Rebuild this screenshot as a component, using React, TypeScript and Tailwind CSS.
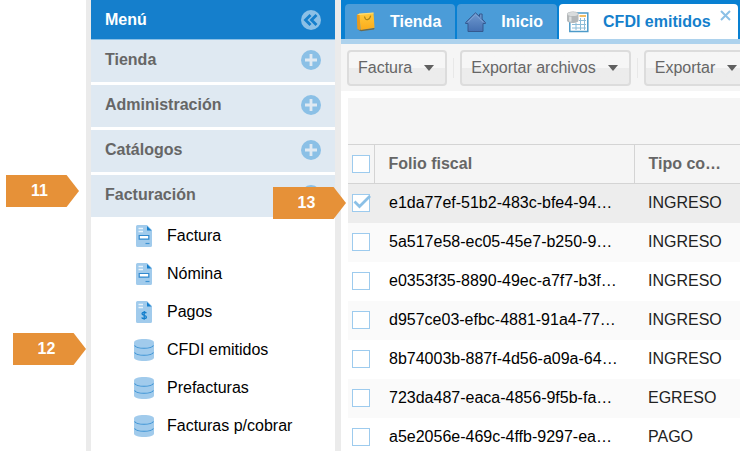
import { useState } from 'react'

const secciones = ['Tienda', 'Administración', 'Catálogos', 'Facturación']

const opciones = [
  { nombre: 'Factura', icono: 'documento' },
  { nombre: 'Nómina', icono: 'documento' },
  { nombre: 'Pagos', icono: 'pago' },
  { nombre: 'CFDI emitidos', icono: 'datos' },
  { nombre: 'Prefacturas', icono: 'datos' },
  { nombre: 'Facturas p/cobrar', icono: 'datos' },
]

const filas = [
  { folio: 'e1da77ef-51b2-483c-bfe4-94…', tipo: 'INGRESO' },
  { folio: '5a517e58-ec05-45e7-b250-9…', tipo: 'INGRESO' },
  { folio: 'e0353f35-8890-49ec-a7f7-b3f…', tipo: 'INGRESO' },
  { folio: 'd957ce03-efbc-4881-91a4-77…', tipo: 'INGRESO' },
  { folio: '8b74003b-887f-4d56-a09a-64…', tipo: 'INGRESO' },
  { folio: '723da487-eaca-4856-9f5b-fa…', tipo: 'EGRESO' },
  { folio: 'a5e2056e-469c-4ffb-9297-ea…', tipo: 'PAGO' },
]

function IconoCirculo({ tipo }: { tipo: 'mas' | 'menos' | 'contraer' }) {
  return (
    <svg width="20" height="20" viewBox="0 0 20 20" fill="none" aria-hidden="true">
      <circle cx="10" cy="10" r="10" fill="#8bc0e6" />
      {tipo === 'contraer' ? (
        <path d="M9.500 5 4.500 10l5 5M15.500 5l-5 5 5 5" stroke="#157fcc" strokeWidth="2.800" />
      ) : (
        <path d={tipo === 'mas' ? 'M10 4v12M4 10h12' : 'M4 10h12'} stroke="#dfe9f2" strokeWidth="2.800" />
      )}
    </svg>
  )
}

function IconoOpcion({ icono }: { icono: string }) {
  if (icono === 'datos') {
    return (
      <svg width="20" height="22" viewBox="0 0 20 22" fill="none" aria-hidden="true">
        <path d="M0 3.500C0 1.500 4 0 10 0s10 1.500 10 3.500v15c0 2-4 3.500-10 3.500S0 20.500 0 18.500z" fill="#a1cbec" />
        <path d="M.5 6.500c1.500 2 5 2.800 9.500 2.800s8-.8 9.500-2.800M.5 13.500c1.500 2 5 2.800 9.500 2.800s8-.8 9.500-2.800" stroke="#3c93d4" strokeWidth="1.100" />
      </svg>
    )
  }
  return (
    <svg width="16" height="22" viewBox="0 0 16 22" fill="none" aria-hidden="true">
      <path d="M1.500 0H11l5 5v15.500a1.500 1.500 0 0 1-1.500 1.500h-13A1.500 1.500 0 0 1 0 20.500v-19A1.500 1.500 0 0 1 1.500 0z" fill="#a1cbec" />
      <path d="M11 1v4.500h4.500z" fill="#157fcc" />
      <path d="M2.500 3.500H7M2.500 6.500H7" stroke="#e8f3fb" strokeWidth="1.400" />
      {icono === 'documento' ? (
        <>
          <path d="M3.200 10.500h9.600v3.600H3.200z" fill="#fff" stroke="#3189cf" strokeWidth="1.200" />
          <path d="M9.500 18.500h4" stroke="#3c93d4" strokeWidth="1.200" />
        </>
      ) : (
        <path d="M10.300 12.300C9.800 11 6 10.700 6 12.800c0 2 4.400 1.200 4.400 3.300 0 2.200-4.200 1.900-4.700.4M8.200 10v8.700" stroke="#157fcc" strokeWidth="1.300" />
      )}
    </svg>
  )
}

function IconoBolsa() {
  return (
    <svg width="20" height="20" viewBox="0 0 20 20" aria-hidden="true">
      <defs>
        <linearGradient id="bolsa" x1="0" y1="0" x2="0" y2="1">
          <stop offset="0" stopColor="#ffcb3d" />
          <stop offset="1" stopColor="#fbab1a" />
        </linearGradient>
      </defs>
      <path d="M1.500 17.500 5 19.200l13-1.700.5-1.500z" fill="#6d6a4c" />
      <path d="M.8 3 4 1.300v17L1.300 17z" fill="#e99a1c" />
      <path d="M3.500 2 17.500.8l1 15L4.500 18z" fill="url(#bolsa)" />
      <path d="M1 3 3.500 1.500l14-1v1L4 3z" fill="#ffdc6e" />
      <path d="M8.500 4.500c.8 4.500 5 4.300 6.200-.8" fill="none" stroke="#a98418" strokeWidth="1.200" />
    </svg>
  )
}

function IconoCasa() {
  return (
    <svg width="21" height="20" viewBox="0 0 21 20" aria-hidden="true">
      <defs>
        <linearGradient id="casa" x1="0" y1="0" x2="0" y2="1">
          <stop offset="0" stopColor="#6f99cf" />
          <stop offset="1" stopColor="#4470b2" />
        </linearGradient>
      </defs>
      <path d="M10.500.8 14.500 4.500V2h2.600v5l3.300 3.500v1h-2.400v8H3v-8H.6v-1z" fill="url(#casa)" stroke="#34598f" />
      <path d="m2.800 10.300 7.700-7.600 7.700 7.600" fill="none" stroke="#84a9d8" strokeWidth="0.800" />
    </svg>
  )
}

function IconoTabla() {
  return (
    <svg width="22" height="22" viewBox="0 0 22 22" fill="none" aria-hidden="true">
      <path d="M2.800 2h18v18.500h-18z" fill="#fff" stroke="#4c9ac9" strokeWidth="1.500" />
      <path d="M12.500 5h6.500" stroke="#f4bd62" strokeWidth="2" />
      <path d="M12 9.500h7M5 13.500h14M5 17h14M9 12v7M13.500 7v12M17.500 7v12" stroke="#8bbcd8" />
      <path d="M0 3C0 1.400 2.600.5 5.700.5s5.800.9 5.800 2.500v6.400c0 1.600-2.700 2.500-5.800 2.500S0 11 0 9.400z" fill="#b3b7b9" />
      <ellipse cx="5.700" cy="3" rx="5.200" ry="2" fill="#d9dcdd" />
      <path d="M3.300 5.600v5" stroke="#dcdfe0" strokeWidth="2.400" />
    </svg>
  )
}

function Boton({ texto }: { texto: string }) {
  return (
    <button
      type="button"
      className="flex h-9 shrink-0 items-center gap-3 rounded border-2 border-[#dcdcdc] bg-linear-to-b from-[#f6f6f6] from-50% to-[#ececec] to-50% pr-[11px] pl-[9px] text-[#666]"
    >
      {texto}
      <svg width="10" height="6" viewBox="0 0 10 6" aria-hidden="true">
        <path d="M0 0h10L5 6z" fill="#606060" />
      </svg>
    </button>
  )
}

function Casilla({ etiqueta, marcada, onChange }: { etiqueta: string; marcada: boolean; onChange: () => void }) {
  return (
    <label className="relative ml-1 block size-[18px]">
      <input
        type="checkbox"
        aria-label={etiqueta}
        checked={marcada}
        onChange={onChange}
        className="block size-[18px] appearance-none border border-[#9dcbee] bg-white"
      />
      {marcada && (
        <svg className="pointer-events-none absolute inset-0" width="19" height="18" viewBox="0 0 19 18" fill="none" aria-hidden="true">
          <path d="m2.500 7.500 5 5L18 2" stroke="#8bc0e6" strokeWidth="2.800" />
        </svg>
      )}
    </label>
  )
}

// Flecha numerada que señala cada paso
function Paso({ numero, posicion }: { numero: number; posicion: string }) {
  return (
    <div
      className={`absolute flex h-8 w-[73px] items-center bg-[#e69138] pr-1.5 [clip-path:polygon(0_0,83%_0,100%_50%,83%_100%,0_100%)] ${posicion}`}
    >
      <span className="w-full text-center font-bold text-white">{numero}</span>
    </div>
  )
}

export default function App() {
  const [seleccion, setSeleccion] = useState<number[]>([0])

  function alternar(i: number) {
    setSeleccion(s => (s.includes(i) ? s.filter(n => n !== i) : [...s, i]))
  }

  function alternarTodas() {
    setSeleccion(s => (s.length === filas.length ? [] : filas.map((_, i) => i)))
  }

  return (
    <div className="relative flex h-screen overflow-hidden bg-white pl-[86px] font-['Liberation_Sans',Arial,sans-serif] text-base leading-5 text-black">
      <aside className="w-[255px] shrink-0 border-r-[6px] border-l-[5px] border-[#ebebeb] bg-white">
        <div className="flex h-10 items-center justify-between border-b border-[#8bc0e6] bg-[#157fcc] px-[14px] font-bold text-white">
          <h2>Menú</h2>
          <button type="button" aria-label="Contraer menú">
            <IconoCirculo tipo="contraer" />
          </button>
        </div>
        <nav>
          <div className="flex flex-col gap-[3px]">
            {secciones.map(nombre => (
              <button
                key={nombre}
                type="button"
                className="flex h-[42px] items-center justify-between bg-[#dfe9f2] px-[14px] pb-0.5 font-bold text-[#666]"
              >
                {nombre}
                <IconoCirculo tipo={nombre === 'Facturación' ? 'menos' : 'mas'} />
              </button>
            ))}
          </div>
          <ul>
            {opciones.map(o => (
              <li key={o.nombre}>
                <a href="#" className="flex h-[38px] items-center gap-3 pl-[42px]">
                  <span className="flex w-[22px] justify-center">
                    <IconoOpcion icono={o.icono} />
                  </span>
                  {o.nombre}
                </a>
              </li>
            ))}
          </ul>
        </nav>
      </aside>

      <main className="min-w-0 flex-1">
        <div className="flex h-11 items-end gap-0.5 overflow-hidden border-b-[5px] border-[#add2ed] bg-[#0880d2] pl-1 font-bold text-white">
          <button type="button" className="flex h-[35px] shrink-0 items-center gap-[14px] rounded-t bg-[#4b9cd8] pr-[14px] pl-[11px]">
            <IconoBolsa />
            Tienda
          </button>
          <button type="button" className="flex h-[35px] shrink-0 items-center gap-[15px] rounded-t bg-[#4b9cd8] pr-[14px] pl-2">
            <IconoCasa />
            Inicio
          </button>
          <div className="flex h-[35px] shrink-0 items-center rounded-t bg-white pr-[7px] pl-2 text-[#157fcc]">
            <button type="button" className="flex items-center gap-[14px]">
              <IconoTabla />
              CFDI emitidos
            </button>
            <button type="button" aria-label="Cerrar" className="mb-3 ml-[9px]">
              <svg width="11" height="11" viewBox="0 0 11 11" aria-hidden="true">
                <path d="m1 1 9 9M10 1l-9 9" stroke="#8bc0e6" strokeWidth="2" />
              </svg>
            </button>
          </div>
        </div>

        <div className="flex h-[47px] items-center gap-1.5 overflow-hidden bg-[#f5f5f5] pl-1.5">
          <Boton texto="Factura" />
          <span className="h-5 w-px shrink-0 bg-[#e8e8e8]" />
          <Boton texto="Exportar archivos" />
          <span className="h-5 w-px shrink-0 bg-[#e8e8e8]" />
          <Boton texto="Exportar" />
        </div>

        <div className="pt-[7px] pl-[7px]">
          <div className="h-[46px] bg-[#f5f5f5]" />
          <table className="w-full table-fixed border-collapse text-left">
            <thead>
              <tr className="h-[39px] border-y border-[#d4d4d4] bg-[#f5f5f5] text-[#666]">
                <th className="w-[26px] border-r border-[#d4d4d4] p-0">
                  <Casilla etiqueta="Seleccionar todo" marcada={seleccion.length === filas.length} onChange={alternarTodas} />
                </th>
                <th className="w-[260px] border-r border-[#d4d4d4] py-0 pr-0 pl-[14px]">Folio fiscal</th>
                <th className="py-0 pr-0 pl-[14px]">Tipo co…</th>
              </tr>
            </thead>
            <tbody>
              {filas.map((f, i) => (
                <tr key={f.folio} className={`h-[39px] ${seleccion.includes(i) ? 'bg-[#ededed]' : i % 2 ? 'bg-[#fafafa]' : 'bg-white'}`}>
                  <td className="p-0">
                    <Casilla etiqueta={f.folio} marcada={seleccion.includes(i)} onChange={() => alternar(i)} />
                  </td>
                  <td className="py-0 pr-0 pl-[15px] whitespace-nowrap">{f.folio}</td>
                  <td className="py-0 pr-0 pl-[14px] text-[#222]">{f.tipo}</td>
                </tr>
              ))}
            </tbody>
          </table>
        </div>
      </main>

      <Paso numero={11} posicion="top-[175px] left-1.5" />
      <Paso numero={12} posicion="top-[333px] left-[13px]" />
      <Paso numero={13} posicion="top-[187px] left-[273px]" />
    </div>
  )
}
